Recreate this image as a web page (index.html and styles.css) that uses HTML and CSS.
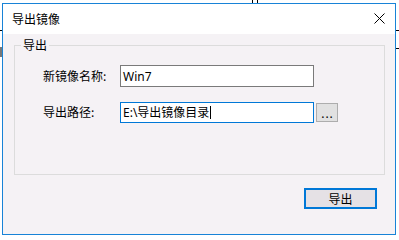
FILE: index.html
```html
<!DOCTYPE html>
<html>
<head>
<meta charset="utf-8">
<link rel="stylesheet" href="styles.css">
</head>
<body>
<div class="desk">
  <span class="bit bit-a"></span>
  <span class="bit bit-b"></span>
  <span class="bit bit-c"></span>
  <span class="bit bit-d"></span>
  <span class="bit bit-e"></span>
  <span class="bit bit-f"></span>
  <div class="window">
    <div class="titlebar">
      <span class="title">导出镜像</span>
      <svg class="close" width="11" height="11" viewBox="0 0 11 11"><path d="M0.5 0.5 L10.5 10.5 M10.5 0.5 L0.5 10.5" stroke="#000" stroke-width="1" fill="none"/></svg>
    </div>
    <div class="body">
      <div class="group">
        <span class="legend">导出</span>
        <div class="form">
          <label class="lbl">新镜像名称:</label>
          <div class="input">Win7</div>
          <div></div>
          <label class="lbl">导出路径:</label>
          <div class="input focus">E:\导出镜像目录<span class="caret"></span></div>
          <button class="browse">...</button>
        </div>
      </div>
      <div class="actions">
        <button class="ok">导出</button>
      </div>
    </div>
  </div>
</div>
</body>
</html>
```
FILE: styles.css
```css
html, body { margin: 0; padding: 0; }
body {
  width: 399px; height: 237px; background: #fff; overflow: hidden;
  font-family: "Noto Sans CJK SC", "Noto Sans", sans-serif; font-size: 12px; color: #000;
}
.desk { position: relative; width: 399px; height: 237px; }
.bit { position: absolute; background: #000; }
.bit-a { left: 252px; top: 0; width: 1px; height: 3px; }
.bit-b { left: 257px; top: 0; width: 1px; height: 3px; }
.bit-c { left: 396px; top: 30px; width: 3px; height: 1px; }
.bit-d { left: 396px; top: 48px; width: 3px; height: 1px; }
.bit-e { left: 0; top: 30px; width: 2px; height: 1px; }
.bit-f { left: 0; top: 47px; width: 2px; height: 10px; background: #777; }
.window {
  position: absolute; left: 2px; top: 3px; width: 392px; height: 230px;
  border: 1px solid #1883d7; background: #f5f2f5;
  display: flex; flex-direction: column;
}
.titlebar {
  height: 30px; background: #fff; display: flex; align-items: center;
  justify-content: space-between; padding: 0 9px 0 9px;
}
.title { font-size: 12px; line-height: 14px; margin-top: -1px; }
.close { margin-right: 1px; margin-top: -1px; }
.body { flex: 1; padding: 11px 10px 0 11px; display: flex; flex-direction: column; }
.group {
  position: relative; box-sizing: border-box; height: 130px; border: 1px solid #dcdcdc;
  padding: 19px 0 0 28px;
}
.legend {
  position: absolute; left: 6px; top: -9px; padding: 0 2px; background: #f5f2f5;
  line-height: 16px;
}
.form {
  display: grid; grid-template-columns: 77px 194px 24px; column-gap: 0;
  grid-template-rows: 22px 21px; row-gap: 15px; align-items: center;
}
.lbl { line-height: 16px; padding-bottom: 1px; }
.input {
  box-sizing: border-box; height: 22px; border: 1px solid #7a7a7a; background: #fff;
  padding: 0 2px; line-height: 19px; display: flex; align-items: center;
  font-family: "Noto Sans", "Noto Sans CJK SC", sans-serif;
}
.input.focus { height: 21px; border-color: #0078d7; }
.caret { display: inline-block; width: 1px; height: 13px; background: #000; margin-left: 1px; }
.browse {
  box-sizing: border-box; width: 22px; height: 19px; margin: 0 0 0 2px; padding: 3px 0 0 0;
  border: 1px solid #adadad; background: #e1e1e1; font-family: "Noto Sans", sans-serif;
  font-size: 12px; line-height: 12px; color: #000; letter-spacing: 1px; text-indent: 1px;
}
.actions { display: flex; justify-content: flex-end; padding: 13px 8px 0 0; }
.ok {
  box-sizing: border-box; width: 73px; height: 21px; margin: 0; padding: 0;
  border: 2px solid #0078d7; background: #e5e1e5;
  font-family: "Noto Sans CJK SC", sans-serif; font-size: 12px; line-height: 15px; color: #000;
}
```
